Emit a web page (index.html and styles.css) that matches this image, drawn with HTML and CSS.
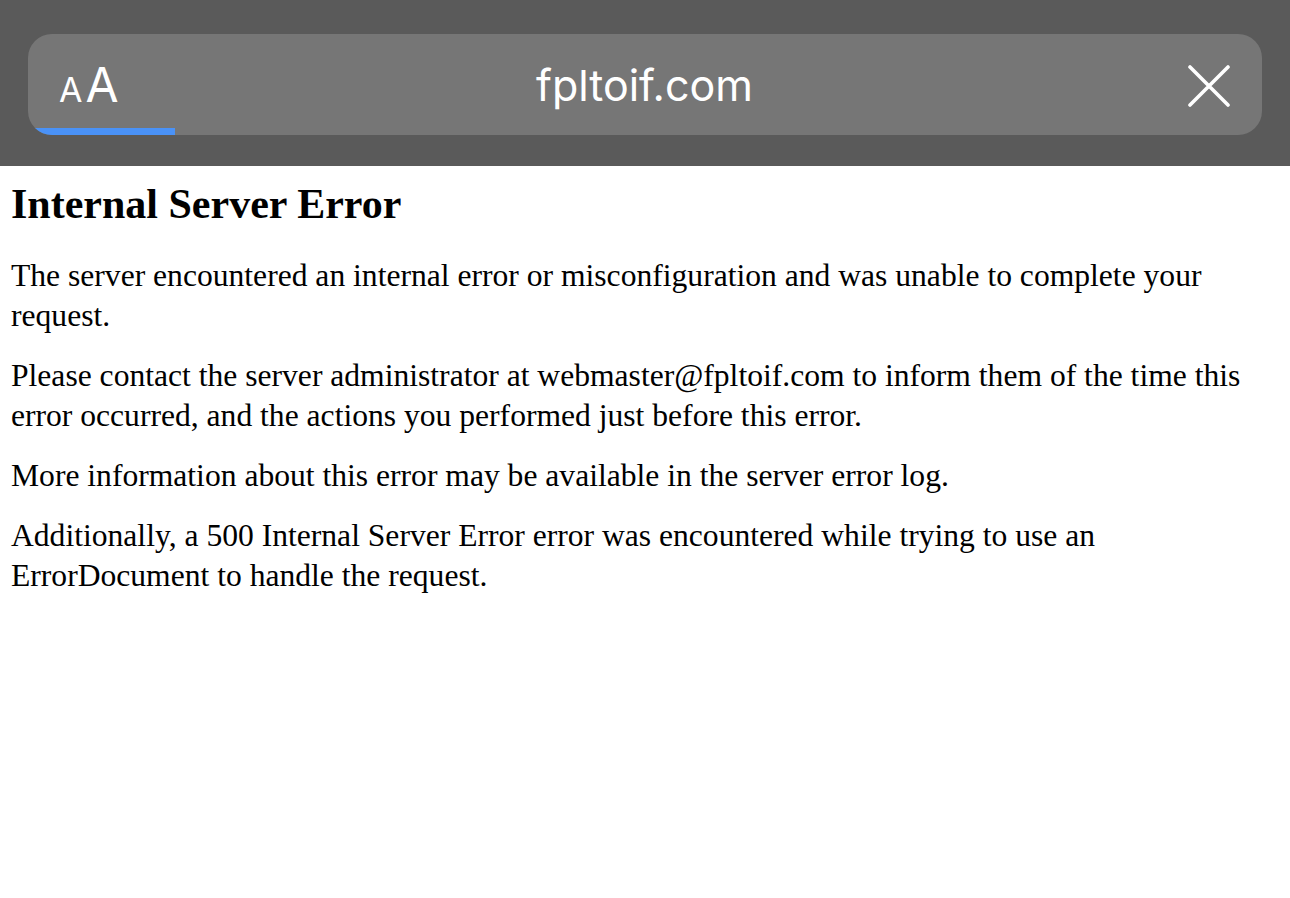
FILE: index.html
```html
<!DOCTYPE html>
<html lang="en">
<head>
<meta charset="utf-8">
<title>500 Internal Server Error</title>
<link rel="stylesheet" href="styles.css">
</head>
<body>
<header class="toolbar">
  <div class="address">
    <div class="side side-left">
      <div class="aa"><span class="aa-small">A</span><span class="aa-big">A</span></div>
    </div>
    <div class="url">fpltoif.com</div>
    <div class="side side-right">
      <svg class="close" width="42" height="42" viewBox="0 0 42 42" aria-hidden="true">
        <path d="M2 2 L40 40 M40 2 L2 40" stroke="#ffffff" stroke-width="3.6" stroke-linecap="round" fill="none"/>
      </svg>
    </div>
    <div class="progress"></div>
  </div>
</header>
<main class="content">
  <h1 class="title">Internal Server Error</h1>
  <p class="para">The server encountered an internal error or misconfiguration and was unable to complete your request.</p>
  <p class="para">Please contact the server administrator at webmaster@fpltoif.com to inform them of the time this error occurred, and the actions you performed just before this error.</p>
  <p class="para">More information about this error may be available in the server error log.</p>
  <p class="para">Additionally, a 500 Internal Server Error error was encountered while trying to use an ErrorDocument to handle the request.</p>
</main>
</body>
</html>
```

FILE: styles.css
```css
html, body {
  margin: 0;
  padding: 0;
  background: #ffffff;
}

.toolbar {
  background: #5a5a5a;
  height: 166px;
  padding: 34px 28px 0 28px;
  box-sizing: border-box;
}

.address {
  position: relative;
  height: 101px;
  background: #767676;
  border-radius: 24px;
  display: flex;
  align-items: center;
  justify-content: space-between;
  padding: 0 32px 0 31px;
  overflow: hidden;
}

.side {
  width: 130px;
  display: flex;
  align-items: center;
}

.side-right {
  justify-content: flex-end;
}

.aa {
  color: #ffffff;
  font-family: Inter, "Noto Sans", sans-serif;
  font-weight: 400;
  display: flex;
  align-items: baseline;
  margin-top: 0;
}

.aa-small {
  font-size: 34px;
  margin-right: 3px;
}

.aa-big {
  font-size: 48px;
}

.url {
  color: #ffffff;
  font-family: Inter, "Noto Sans", sans-serif;
  font-size: 43px;
  font-weight: 400;
  margin-top: 0;
}

.close {
  display: block;
  margin-top: 3px;
}

.progress {
  position: absolute;
  left: 0;
  bottom: 0;
  width: 147px;
  height: 7px;
  background: #4a92f7;
}

.content {
  padding: 0 11px;
  font-family: "Liberation Serif", "Times New Roman", serif;
  color: #000000;
}

.title {
  font-size: 42px;
  font-weight: 700;
  line-height: 48px;
  margin: 14px 0 28px 0;
}

.para {
  font-size: 31.6px;
  line-height: 40px;
  margin: 0 0 20px 0;
}
```
